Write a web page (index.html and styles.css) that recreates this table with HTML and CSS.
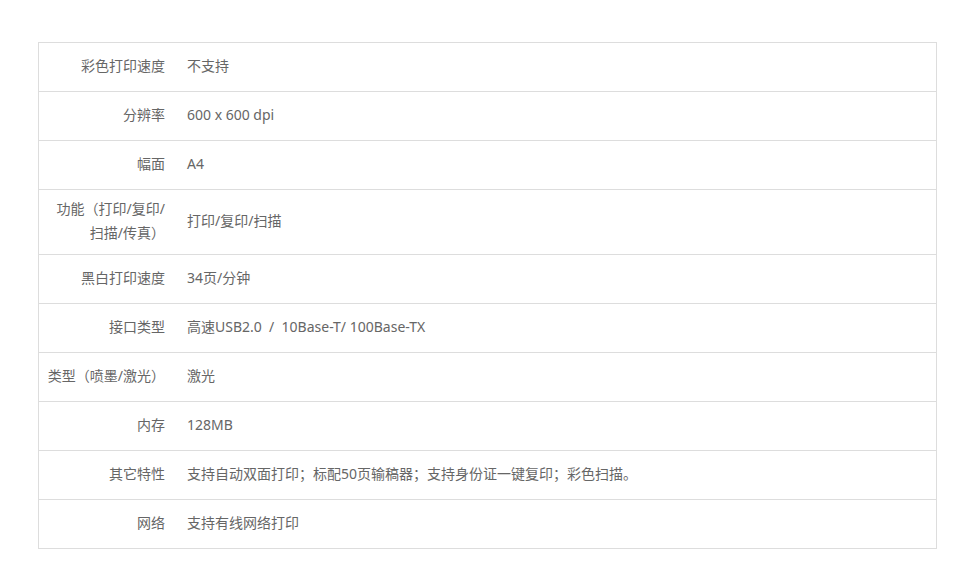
FILE: index.html
```html
<!DOCTYPE html>
<html lang="zh-CN">
<head>
<meta charset="utf-8">
<title>参数</title>
<link rel="stylesheet" href="styles.css">
</head>
<body>
<div class="page">
  <div class="spec">
    <div class="row"><div class="label">彩色打印速度</div><div class="value">不支持</div></div>
    <div class="row"><div class="label">分辨率</div><div class="value">600 x 600 dpi</div></div>
    <div class="row"><div class="label">幅面</div><div class="value">A4</div></div>
    <div class="row"><div class="label">功能（打印/复印/<br>扫描/传真）</div><div class="value">打印/复印/扫描</div></div>
    <div class="row"><div class="label">黑白打印速度</div><div class="value">34页/分钟</div></div>
    <div class="row"><div class="label">接口类型</div><div class="value">高速USB2.0 &nbsp;/ &nbsp;10Base-T/ 100Base-TX</div></div>
    <div class="row"><div class="label">类型（喷墨/激光）</div><div class="value">激光</div></div>
    <div class="row"><div class="label">内存</div><div class="value">128MB</div></div>
    <div class="row"><div class="label">其它特性</div><div class="value">支持自动双面打印；标配50页输稿器；支持身份证一键复印；彩色扫描。</div></div>
    <div class="row"><div class="label">网络</div><div class="value">支持有线网络打印</div></div>
  </div>
</div>
</body>
</html>
```
FILE: styles.css
```css
html, body {
  margin: 0;
  padding: 0;
  background: #fff;
}
.page {
  padding: 42px 0 0 38px;
}
.spec {
  width: 897px;
  border: 1px solid #dddddd;
  font-family: "Noto Sans", "Noto Sans CJK SC", sans-serif;
  font-size: 14px;
  line-height: 24px;
  color: #666666;
}
.row {
  display: grid;
  grid-template-columns: 136px 1fr;
  min-height: 48px;
  border-bottom: 1px solid #dddddd;
}
.row:last-child {
  border-bottom: none;
}
.label {
  padding: 7px 10px 9px 4px;
  text-align: right;
  white-space: nowrap;
  display: flex;
  flex-direction: column;
  justify-content: center;
  align-items: flex-end;
}
.value {
  padding: 7px 10px 9px 12px;
  display: flex;
  align-items: center;
}
```
